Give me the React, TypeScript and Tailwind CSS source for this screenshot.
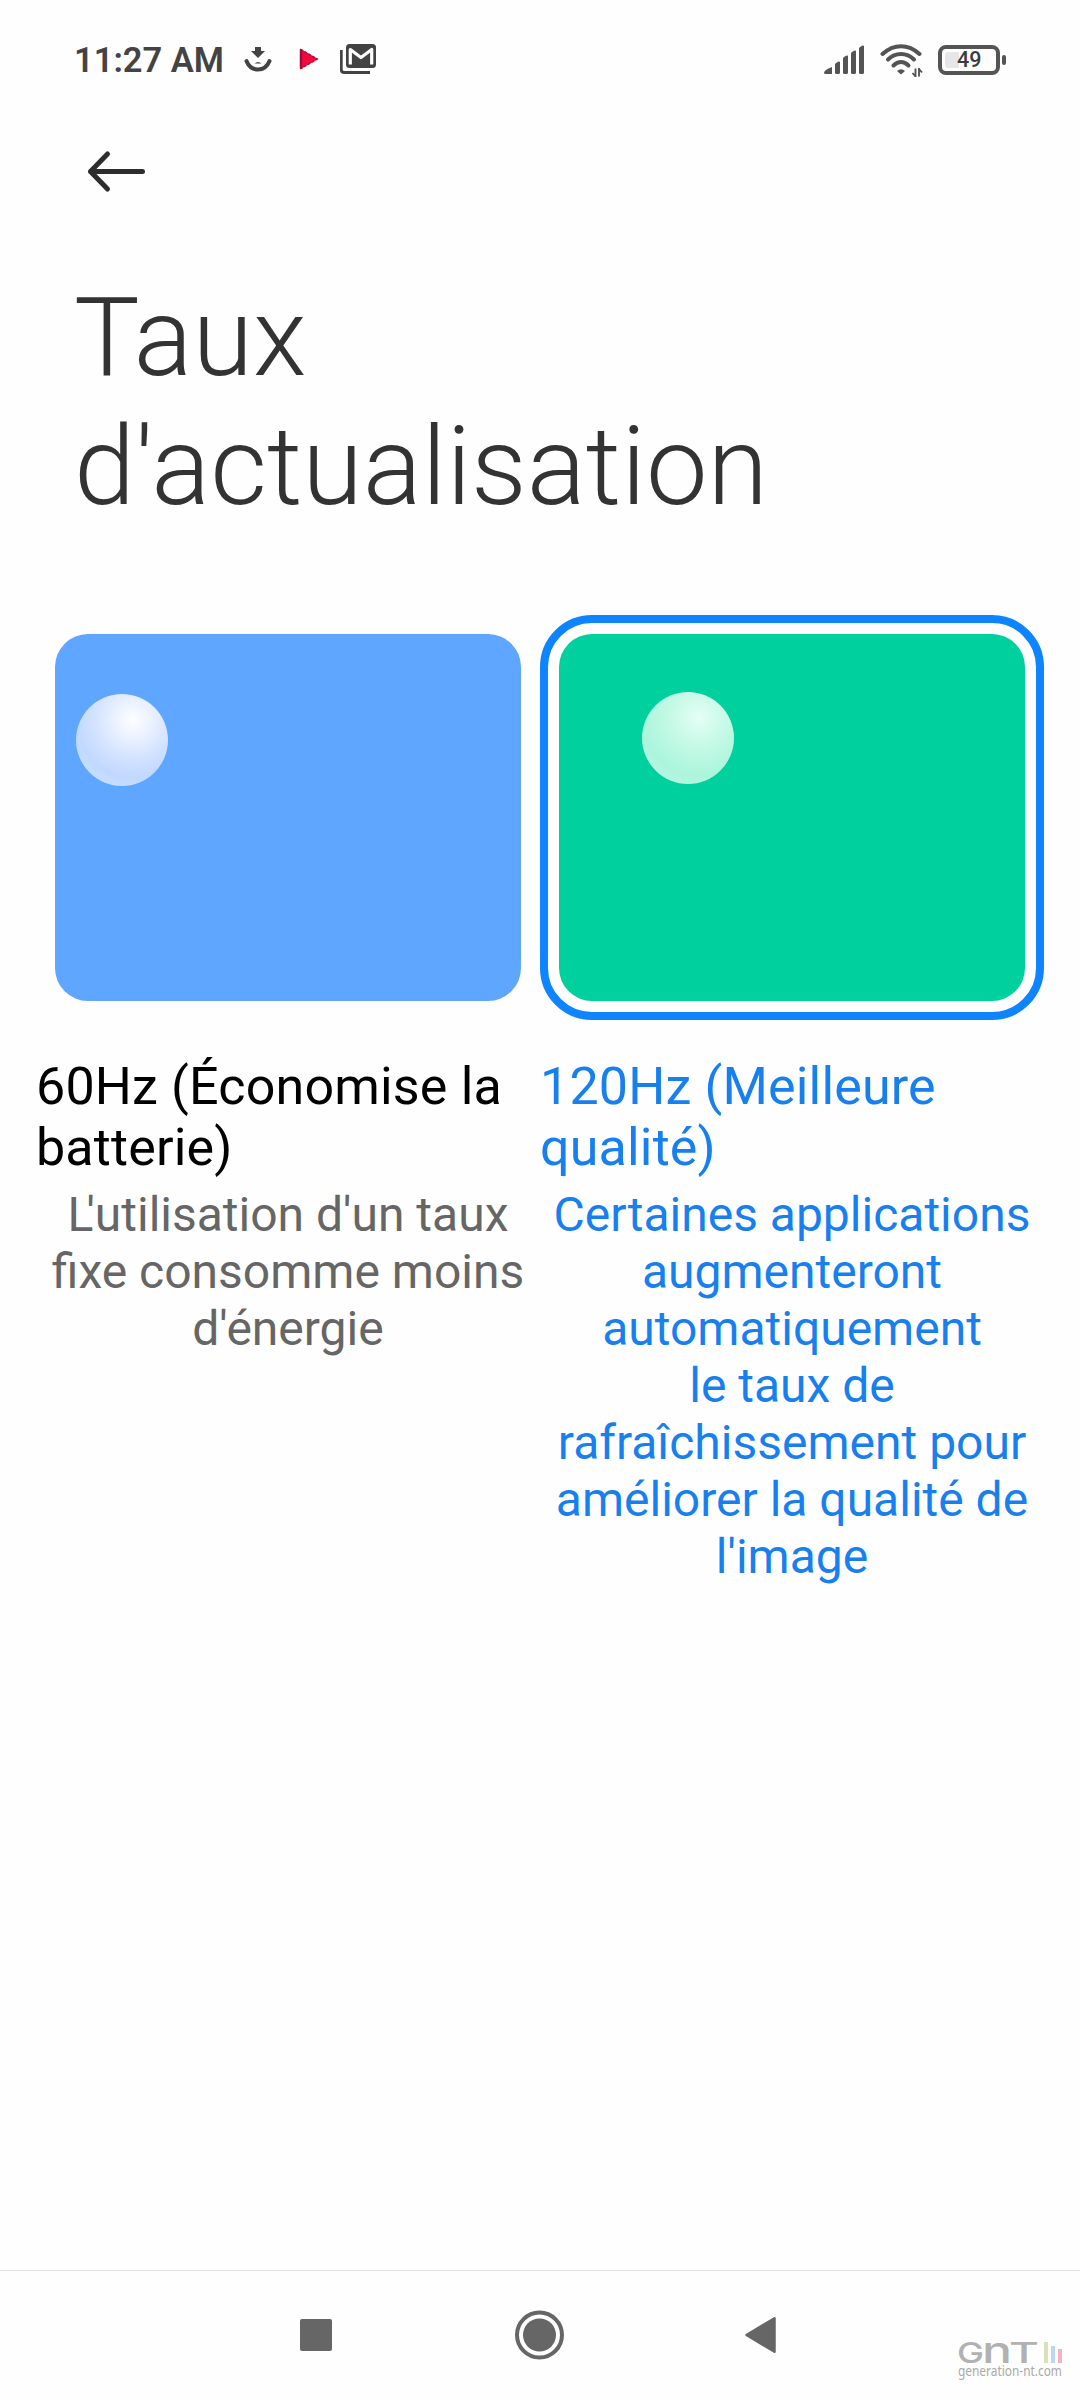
import React from "react";

interface RateOption {
  title: string;
  description: React.ReactNode;
  selected: boolean;
  cardClass: string;
  ballClass: string;
}

const options: RateOption[] = [
  {
    title: "60Hz (Économise la\nbatterie)",
    description: (
      <>
        <span className="tracking-[-7px]">L</span>
        {"'utilisation d'un taux\nfixe consomme moins\nd'énergie"}
      </>
    ),
    selected: false,
    cardClass: "bg-[#5ea6ff] pl-[21px] pt-[60px]",
    ballClass: "bg-[radial-gradient(circle_at_62%_28%,#fdfeff_0%,#eaf1ff_22%,#d5e4ff_42%,#c1d8ff_66%,#cde3ff_90%)]",
  },
  {
    title: "120Hz (Meilleure\nqualité)",
    description:
      "Certaines applications\naugmenteront\nautomatiquement\nle taux de\nrafraîchissement pour\naméliorer la qualité de\nl'image",
    selected: true,
    cardClass: "bg-[#00d09e] pl-[83px] pt-[58px]",
    ballClass: "bg-[radial-gradient(circle_at_62%_28%,#e6fef6_0%,#cffbeb_22%,#bdf8e3_42%,#abf5dc_66%,#bff4e3_90%)]",
  },
];

function StatusBar() {
  return (
    <header className="flex h-[118px] items-start justify-between pl-[74px] pr-[74px] pt-[40px] text-[#434343]">
      <div className="flex h-10 items-center">
        <span className="w-[149px] whitespace-nowrap text-[34.5px] font-semibold leading-10">11:27 AM</span>
        <svg className="ml-[21px] h-8 w-[28px]" viewBox="0 0 28 32" fill="none">
          <path d="M11 3h6v4h4l-7 7-7-7h4z" fill="currentColor" />
          <path d="M2.5 17c2 5 6.400 8.500 11.500 8.500S23.500 22 25.500 17" stroke="currentColor" strokeWidth="4" strokeLinecap="round" />
          <path d="M10.500 19.500q3.500-3 7 0z" fill="currentColor" />
        </svg>
        <svg className="ml-[27px] h-8 w-5" viewBox="0 0 20 32">
          <path d="M1 4.500L19 15L1 25.500z" fill="#f5083b" />
          <path d="M2 5.500v19" stroke="#a00a3c" strokeWidth="2.500" />
          <path d="M1.500 5.500L18 15 1.500 24.800" stroke="#a5123f" strokeWidth="1.600" fill="none" strokeDasharray="3 1.500" />
        </svg>
        <svg className="ml-[21px] h-8 w-9" viewBox="0 0 36 32">
          <path d="M1.300 6v19.500q0 3 3 3H30" stroke="currentColor" strokeWidth="2.800" fill="none" />
          <rect x="6" y="0" width="30" height="24" rx="3.500" fill="currentColor" />
          <path d="M10.300 20.500V5.500L21 13.500 31.700 5.500V20.500" stroke="#fefefe" strokeWidth="3.200" fill="none" strokeLinejoin="round" />
        </svg>
      </div>
      <div className="flex h-10 items-center text-[#545454]">
        <svg className="h-[30px] w-[41px]" viewBox="0 0 41 30" fill="currentColor">
          <path d="M0 28q0-3 8-6v7H1.500Q0 29 0 28z" />
          <path d="M11 19.500q0-1 1-1.500l2.500-1.500q1.500-.5 1.500 1v10q0 1.500-1.500 1.500h-2q-1.500 0-1.500-1.500z" />
          <path d="M19 13.500q0-1 1-1.500l2.500-1.500q1.500-.5 1.500 1v16q0 1.500-1.500 1.500h-2q-1.500 0-1.500-1.500z" />
          <path d="M27 8.500q0-1 1-1.500l2.500-1.500q1.500-.5 1.500 1v21q0 1.500-1.500 1.500h-2q-1.500 0-1.500-1.500z" />
          <path d="M35 3.500q0-1 1-1.500l2.500-1.500q1.500-.5 1.500 1v26q0 1.500-1.500 1.500h-2q-1.500 0-1.500-1.500z" />
        </svg>
        <svg className="ml-[15px] h-[34px] w-[44px] translate-y-[1px]" viewBox="0 0 44 34" fill="none" stroke="currentColor">
          <path d="M2.500 10Q11 2.200 21 2.200T39.500 10" strokeWidth="4" strokeLinecap="round" />
          <path d="M8 15.500Q13.500 10 21 10T34 15.500" strokeWidth="4" strokeLinecap="round" />
          <path d="M13.500 21.500Q17 18 21 18T28.500 21.500" strokeWidth="4" strokeLinecap="round" />
          <path d="M17 27q4-3.500 8 0l-4 3.500z" fill="currentColor" stroke="none" />
          <path d="M35.500 33V24.500M32.500 29l3 3.500M39 24v8.500M39 25l3 3.500" strokeWidth="1.900" />
        </svg>
        <div className="ml-[14px] flex h-[30px] w-[62px] items-center rounded-[8px] border-4 border-[#545454] pl-[3px]">
          <div className="h-4 w-[14px] rounded-l-[3px] bg-[#e6e6e6]" />
          <span className="-ml-[2px] text-[21.5px] font-medium leading-[22px] text-[#3c3c3c]">49</span>
        </div>
        <div className="ml-[2px] h-[10px] w-1 rounded-[2px] bg-[#545454]" />
      </div>
    </header>
  );
}

function RateCard({ title, description, selected, cardClass, ballClass }: RateOption) {
  return (
    <div className={`w-[504px] ${selected ? "text-[#1880ee]" : "text-black"}`}>
      <div
        className={`h-[405px] rounded-[52px] border-8 p-[11px] ${selected ? "border-[#0f84ff]" : "border-transparent"}`}
      >
        <div className={`h-[367px] w-[466px] rounded-[33px] ${cardClass}`}>
          <div className={`size-[92px] rounded-full ${ballClass}`} />
        </div>
      </div>
      <h2 className="mt-[36px] whitespace-pre-line text-[52px] leading-[61px] tracking-[0.17px]">{title}</h2>
      <p
        className={`mt-[8px] whitespace-pre-line text-center text-[48px] leading-[57px] ${selected ? "" : "text-[#666666]"}`}
      >
        {description}
      </p>
    </div>
  );
}

function Watermark() {
  return (
    <svg className="absolute bottom-4 right-4 h-[46px] w-[108px] overflow-visible" viewBox="0 0 108 46">
      <g fill="#b1b1b1" fontFamily="Inter" fontWeight="500">
        <text x="1" y="25" fontSize="29" textLength="27" lengthAdjust="spacingAndGlyphs">G</text>
        <text x="26" y="25" fontSize="37" textLength="30" lengthAdjust="spacingAndGlyphs">n</text>
        <text x="53" y="25" fontSize="29" textLength="30" lengthAdjust="spacingAndGlyphs">T</text>
      </g>
      <rect x="88" y="4" width="4" height="21" fill="#d3e5b5" />
      <rect x="95" y="8" width="4" height="17" fill="#bcd6f0" />
      <rect x="102" y="11" width="4" height="14" fill="#f3b4bd" />
      <text x="2" y="38" fontSize="14.500" fill="#a9a9a9" fontFamily="Noto Sans" textLength="104" lengthAdjust="spacingAndGlyphs">
        generation-nt.com
      </text>
    </svg>
  );
}

export default function App() {
  return (
    <div className="flex h-[2400px] w-[1080px] flex-col bg-[#fefefe] font-[Roboto,sans-serif]">
      <StatusBar />
      <svg className="ml-[84px] mt-[30px] h-12 w-16 shrink-0" viewBox="0 0 64 48" fill="none" stroke="#2d2d2d" strokeWidth="5" strokeLinecap="round" strokeLinejoin="round">
        <path d="M6.500 23.500H58.500M23.500 6L6.500 23.500l17 17.500" />
      </svg>
      <h1 className="ml-[74px] mt-[77px] whitespace-pre-line text-[110px] font-light leading-[129px] text-[#333333]">
        {"Taux\nd'actualisation"}
      </h1>
      <main className="ml-[36px] mt-[84px] flex">
        {options.map((option) => (
          <RateCard key={option.title} {...option} />
        ))}
      </main>
      <nav className="relative mt-auto flex h-[130px] items-center border-t border-[#e0e0e0] pb-[2px] pl-[300px] text-[#666666]">
        <div className="size-8 rounded-[2px] bg-[#666666]" />
        <svg className="ml-[182px] size-[50px]" viewBox="0 0 50 50">
          <circle cx="25.500" cy="25" r="22.500" fill="none" stroke="currentColor" strokeWidth="4" />
          <circle cx="25.500" cy="25" r="16.500" fill="currentColor" />
        </svg>
        <svg className="ml-[181px] h-[38px] w-[31px]" viewBox="0 0 31 38">
          <path d="M1.500 19L29.500 2.200V35.800z" fill="currentColor" stroke="currentColor" strokeWidth="2.500" strokeLinejoin="round" />
        </svg>
        <Watermark />
      </nav>
    </div>
  );
}
